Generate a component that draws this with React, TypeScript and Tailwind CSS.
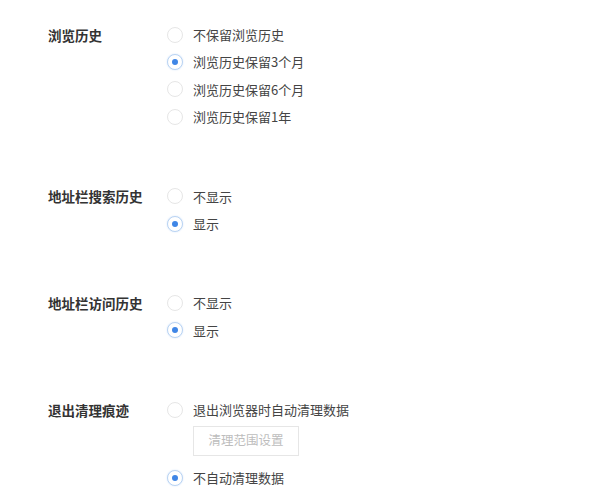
import { Fragment, useState } from 'react';

type Section = {
  key: string;
  label: string;
  options: string[];
  extra?: number; // index after which the settings button sits
};

const sections: Section[] = [
  { key: 'history', label: '浏览历史', options: ['不保留浏览历史', '浏览历史保留3个月', '浏览历史保留6个月', '浏览历史保留1年'] },
  { key: 'search', label: '地址栏搜索历史', options: ['不显示', '显示'] },
  { key: 'visit', label: '地址栏访问历史', options: ['不显示', '显示'] },
  { key: 'clear', label: '退出清理痕迹', options: ['退出浏览器时自动清理数据', '不自动清理数据'], extra: 0 },
];

function Radio({ checked, label, onClick }: { checked: boolean; label: string; onClick: () => void }) {
  return (
    <button type="button" onClick={onClick} className="flex h-[27.4px] items-center gap-[10px] text-left">
      <span
        className={`flex h-[16px] w-[16px] shrink-0 items-center justify-center rounded-full border bg-white ${
          checked ? 'border-[#b9d3f3] shadow-[0_0_2px_#d6e6fa]' : 'border-[#e6e6e6]'
        }`}
      >
        {checked && <span className="h-[6px] w-[6px] rounded-full bg-[#3f86e6]" />}
      </span>
      <span className="text-[13px] text-[#444]">{label}</span>
    </button>
  );
}

export default function App() {
  const [values, setValues] = useState<Record<string, number>>({ history: 1, search: 1, visit: 1, clear: 1 });

  return (
    <div className="min-h-[504px] w-[600px] bg-white pl-[48px] pt-[21px] font-['Microsoft_YaHei','Noto_Sans_CJK_SC',sans-serif]">
      <div className="flex flex-col gap-[52px]">
        {sections.map((s) => (
          <div key={s.key} className="flex">
            <div className="flex h-[27.4px] w-[119px] shrink-0 items-center text-[13.5px] font-bold text-[#333]">{s.label}</div>
            <div className="flex flex-col">
              {s.options.map((o, i) => (
                <Fragment key={o}>
                  <Radio checked={values[s.key] === i} label={o} onClick={() => setValues((v) => ({ ...v, [s.key]: i }))} />
                  {s.extra === i && (
                    <button
                      type="button"
                      className="mb-[9px] ml-[26px] mt-[2px] h-[30px] w-[106px] border border-[#e6e6e6] bg-white text-[12.5px] text-[#bdbdbd]"
                    >
                      清理范围设置
                    </button>
                  )}
                </Fragment>
              ))}
            </div>
          </div>
        ))}
      </div>
    </div>
  );
}
